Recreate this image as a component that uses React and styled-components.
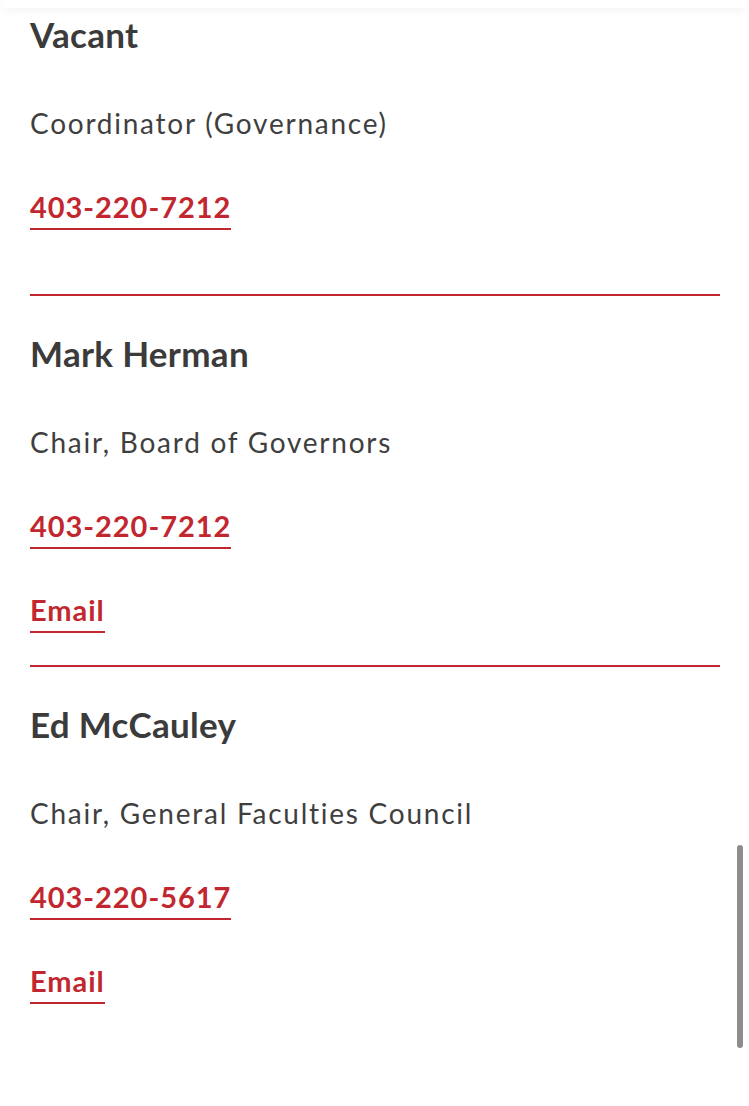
import React from 'react'
import styled, { createGlobalStyle } from 'styled-components'

const GlobalStyle = createGlobalStyle`
    html, body{
        margin: 0;
        padding: 0;
        background: #ffffff;
    }
    body{
        font-family: Lato, "Liberation Sans", sans-serif;
        font-variant-ligatures: none;
        color: #3d3d3d;
        -webkit-font-smoothing: antialiased;
    }
`;

const contacts = [
    { name: 'Vacant', role: 'Coordinator (Governance)', phone: '403-220-7212' },
    { name: 'Mark Herman', role: 'Chair, Board of Governors', phone: '403-220-7212', email: true },
    { name: 'Ed McCauley', role: 'Chair, General Faculties Council', phone: '403-220-5617', email: true },
]

function App() {
  return (
    <PageStyled>
        <GlobalStyle />
        <TopShade />
        <ContactList>
            {contacts.map((c, i) => (
                <Contact key={c.name} $last={i === contacts.length - 1} $tail={c.email ? 32 : 64}>
                    <Name>{c.name}</Name>
                    <Role>{c.role}</Role>
                    <LinkRow>
                        <RedLink href={`tel:${c.phone}`}>{c.phone}</RedLink>
                    </LinkRow>
                    {c.email && (
                        <LinkRow $gap={46}>
                            <RedLink href="#">Email</RedLink>
                        </LinkRow>
                    )}
                </Contact>
            ))}
        </ContactList>
        <ScrollThumb />
    </PageStyled>
  )
}

const PageStyled = styled.div`
    position: relative;
    width: 749px;
    height: 1106px;
    overflow: hidden;
    background: #fff;
`;

// shadow left by the sticky header sitting just above the view
const TopShade = styled.div`
    position: absolute;
    top: 0;
    left: 4px;
    right: 4px;
    height: 8px;
    background: #fff;
    box-shadow: 0 3px 8px rgba(0, 0, 0, 0.05);
    z-index: 2;
`;

const ContactList = styled.div`
    display: flex;
    flex-direction: column;
    padding: 17px 29px 0 30px;
`;

const Contact = styled.section`
    display: flex;
    flex-direction: column;
    align-items: flex-start;
    padding-bottom: ${p => p.$tail}px;
    border-bottom: ${p => (p.$last ? 'none' : '2px solid #c2272f')};
    & + &{
        padding-top: 40px;
    }
`;

const Name = styled.h3`
    margin: 0;
    font-size: 35px;
    line-height: 35px;
    font-weight: 700;
    letter-spacing: 0.3px;
    color: #3b3b3b;
`;

const Role = styled.p`
    margin: 57px 0 0;
    font-size: 28px;
    line-height: 28px;
    font-weight: 400;
    letter-spacing: 1.75px;
    color: #3f3f3f;
`;

const LinkRow = styled.div`
    margin-top: ${p => p.$gap ?? 55}px;
`;

const RedLink = styled.a`
    display: inline-block;
    font-size: 29px;
    line-height: 29px;
    font-weight: 700;
    letter-spacing: 0.95px;
    color: #c2272f;
    text-decoration: none;
    padding-bottom: 7px;
    border-bottom: 2px solid #c2272f;
`;

const ScrollThumb = styled.div`
    position: absolute;
    right: 6px;
    top: 845px;
    width: 6px;
    height: 203px;
    border-radius: 3px;
    background: #8d8d8d;
`;

export default App
